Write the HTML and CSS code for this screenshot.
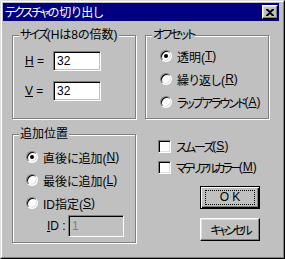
FILE: index.html
```html
<!DOCTYPE html>
<html lang="ja">
<head>
    <meta charset="UTF-8">
    <title>テクスチャの切り出し</title>
    <link rel="stylesheet" href="styles.css">
</head>
<body>
    <div class="window">
        <div class="frame">
            <div class="titlebar">
                <span class="title"><span class="kana">テクスチャ</span>の切り出し</span>
                <button class="close-btn">
                    <svg width="8" height="7" viewBox="0 0 8 7"><path d="M0 0h2l2 2 2-2h2v1L5 3.5 8 6v1H6L4 5 2 7H0V6l3-2.5L0 1z" fill="#000"/></svg>
                </button>
            </div>

            <div class="dialog">
                <div class="col">
                    <!-- サイズ -->
                    <div class="group group-size">
                        <span class="group-title"><span class="kana">サイズ</span>(Hは8の倍数)</span>
                        <div class="field-row first">
                            <label class="field-label"><u>H</u> =</label>
                            <div class="textbox">32</div>
                        </div>
                        <div class="field-row">
                            <label class="field-label"><u>V</u> =</label>
                            <div class="textbox">32</div>
                        </div>
                    </div>

                    <!-- 追加位置 -->
                    <div class="group group-pos">
                        <span class="group-title">追加位置</span>
                        <div class="radio-list">
                            <div class="option"><span class="radio checked"></span>直後に追加(<u>N</u>)</div>
                            <div class="option"><span class="radio"></span>最後に追加(<u>L</u>)</div>
                            <div class="option"><span class="radio"></span>ID指定(<u>S</u>)</div>
                        </div>
                        <div class="id-row">
                            <label class="id-label"><u>I</u>D :</label>
                            <div class="textbox disabled">1</div>
                        </div>
                    </div>
                </div>

                <div class="col">
                    <!-- オフセット -->
                    <div class="group group-offset">
                        <span class="group-title"><span class="kana">オフセット</span></span>
                        <div class="radio-list">
                            <div class="option"><span class="radio checked"></span>透明(<u>T</u>)</div>
                            <div class="option"><span class="radio"></span>繰り返し(<u>R</u>)</div>
                            <div class="option"><span class="radio"></span><span class="kana">ラップアラウンド</span>(<u>A</u>)</div>
                        </div>
                    </div>

                    <div class="checks">
                        <div class="option"><span class="checkbox"></span><span class="kana">スムーズ</span>(<u>S</u>)</div>
                        <div class="option"><span class="checkbox"></span><span class="kana tight">マテリアルカラー</span>(<u>M</u>)</div>
                    </div>

                    <div class="buttons">
                        <button class="btn default"><span class="focus">O K</span></button>
                        <button class="btn"><span class="kana tight">キャンセル</span></button>
                    </div>
                </div>
            </div>
        </div>
    </div>
</body>
</html>
```

FILE: styles.css
```css
:root {
    --face: #c0c0c0;
    --light: #dfdfdf;
    --shadow: #808080;
    --title-bg: #000080;
}
body, html {
    margin: 0;
    padding: 0;
    background: var(--face);
}
body {
    font-family: 'Liberation Sans', 'Noto Sans CJK JP', sans-serif;
    font-size: 12px;
    font-feature-settings: "palt";
    color: #000;
}
/* katakana in the old UI font runs narrower than Noto */
.kana {
    letter-spacing: -2px;
}
.kana.tight {
    letter-spacing: -3px;
}
.window {
    width: 285px;
    height: 259px;
    box-sizing: border-box;
    border: 1px solid;
    border-color: var(--light) #000 #000 var(--light);
}
.frame {
    height: 100%;
    box-sizing: border-box;
    border: 1px solid;
    border-color: #fff var(--shadow) var(--shadow) #fff;
    padding: 1px 4px 1px 1px;
}
.titlebar {
    height: 18px;
    background: var(--title-bg);
    display: flex;
    align-items: center;
    justify-content: space-between;
}
.title {
    color: #fff;
    padding-left: 2px;
    line-height: 18px;
    font-family: 'Noto Sans CJK JP', sans-serif;
}
.close-btn {
    width: 16px;
    height: 14px;
    padding: 0;
    margin-right: 1px;
    background: var(--face);
    border: 1px solid;
    border-color: #fff #000 #000 #fff;
    box-shadow: inset -1px -1px 0 var(--shadow), inset 1px 1px 0 var(--light);
    display: flex;
    align-items: center;
    justify-content: center;
}
.close-btn svg {
    display: block;
    margin-left: -1px;
}

.dialog {
    display: flex;
    gap: 9px;
    padding: 14px 0 0 9px;
}
.col {
    width: 124px;
    display: flex;
    flex-direction: column;
}
.group {
    box-sizing: border-box;
    border: 1px solid var(--shadow);
    box-shadow: 1px 1px 0 #fff, inset 1px 1px 0 #fff;
}
.group-title {
    display: block;
    width: max-content;
    margin: -8px 0 0 6px;
    padding: 0 1px;
    line-height: 14px;
    background: var(--face);
}
.group-size, .group-offset {
    height: 84px;
}
.group-pos {
    height: 109px;
    margin-top: 15px;
}

.field-row {
    display: flex;
    align-items: center;
    padding-left: 12px;
    margin-top: 10px;
}
.field-row.first {
    margin-top: 9px;
}
.field-label {
    width: 28px;
}
.textbox {
    width: 48px;
    height: 20px;
    box-sizing: border-box;
    background: #fff;
    border: 1px solid;
    border-color: var(--shadow) #fff #fff var(--shadow);
    box-shadow: inset 1px 1px 0 #000, inset -1px -1px 0 var(--face);
    padding: 0 3px;
    line-height: 18px;
}
.textbox.disabled {
    width: 56px;
    height: 22px;
    line-height: 20px;
    background: var(--face);
    color: var(--shadow);
}

.radio-list {
    display: flex;
    flex-direction: column;
    gap: 7px;
}
.group-offset .radio-list {
    margin-top: 6px;
    padding-left: 14px;
}
.group-pos .radio-list {
    margin-top: 8px;
    padding-left: 13px;
}
.option {
    display: flex;
    align-items: center;
    height: 16px;
    white-space: nowrap;
}
.radio {
    width: 12px;
    height: 12px;
    margin-right: 5px;
    flex: none;
    border-radius: 50%;
    box-sizing: border-box;
    background: #fff;
    border: 1px solid;
    border-color: var(--shadow) #fff #fff var(--shadow);
    box-shadow: inset 1px 1px 0 #000, inset -1px -1px 0 var(--light);
    display: flex;
    align-items: center;
    justify-content: center;
}
.radio.checked::after {
    content: "";
    width: 4px;
    height: 4px;
    border-radius: 50%;
    background: #000;
}
.id-row {
    display: flex;
    align-items: center;
    margin-top: 4px;
    padding-left: 34px;
}
.id-label {
    width: 21px;
}

.checks {
    margin-top: 19px;
    padding-left: 13px;
    display: flex;
    flex-direction: column;
    gap: 5px;
}
.checkbox {
    width: 13px;
    height: 13px;
    margin-right: 5px;
    flex: none;
    box-sizing: border-box;
    background: #fff;
    border: 1px solid;
    border-color: var(--shadow) #fff #fff var(--shadow);
    box-shadow: inset 1px 1px 0 #000, inset -1px -1px 0 var(--light);
}

.buttons {
    margin: 11px 0 0 55px;
    display: flex;
    flex-direction: column;
    gap: 9px;
}
.btn {
    width: 60px;
    height: 23px;
    padding: 0;
    box-sizing: border-box;
    font: inherit;
    color: #000;
    background: var(--face);
    border: 1px solid;
    border-color: #fff #000 #000 #fff;
    box-shadow: inset -1px -1px 0 var(--shadow), inset 1px 1px 0 var(--light);
    display: flex;
    align-items: center;
    justify-content: center;
}
.btn.default {
    border: 1px solid #000;
    box-shadow: inset 1px 1px 0 #fff, inset -1px -1px 0 #000, inset -2px -2px 0 var(--shadow);
}
.btn .focus {
    box-sizing: border-box;
    width: 50px;
    height: 15px;
    line-height: 13px;
    border: 1px dotted #000;
    text-align: center;
}
```
